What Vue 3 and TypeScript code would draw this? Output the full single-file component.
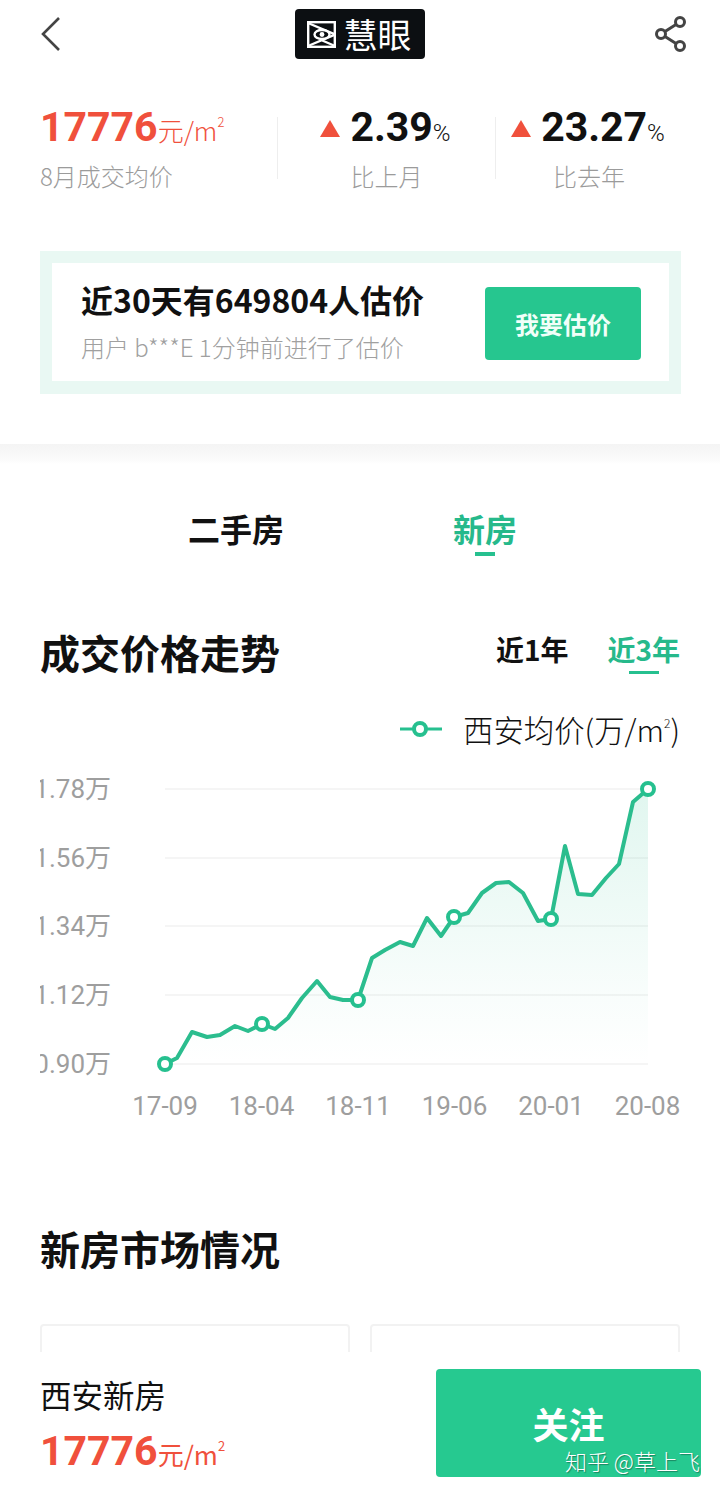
<script setup lang="ts">
const pts: [number, number][] = [
  [165, 1064], [177, 1058], [192, 1032], [207, 1037], [220, 1035], [235, 1026], [248, 1031], [262, 1024],
  [275, 1029], [288, 1018], [302, 998], [317, 981], [330, 997], [343, 1000], [358, 1000], [372, 958],
  [385, 950], [400, 942], [413, 946], [427, 918], [441, 936], [454, 917], [468, 913], [482, 893],
  [496, 883], [509, 882], [523, 893], [538, 921], [551, 919], [565, 846], [578, 894], [592, 895],
  [606, 878], [619, 864], [633, 802], [648, 789],
]
const ox = 40
const oy = 770
const shifted = pts.map(([x, y]) => [x - ox, y - oy])
const line = shifted.map((p) => p.join(',')).join(' ')
const area = `${line} 608,294 125,294`
const markers = [0, 7, 14, 21, 28, 35].map((i) => shifted[i])
const grid = [19, 88, 156, 225, 294]
const yLabels = ['1.78万', '1.56万', '1.34万', '1.12万', '0.90万']
const xLabels = ['17-09', '18-04', '18-11', '19-06', '20-01', '20-08']
</script>

<template>
  <div class="page">
    <header class="nav">
      <svg class="back" width="22" height="36" viewBox="0 0 22 36">
        <path d="M19 2 3 18l16 16" fill="none" stroke="#444" stroke-width="2.6" />
      </svg>
      <div class="logo">
        <svg width="29" height="27" viewBox="0 0 29 27" fill="none" stroke="#fff" stroke-width="2.4">
          <rect x="1.200" y="1.200" width="26.600" height="24.600" />
          <path d="M1 2 28 13.500 1 25M28 25 13 18.500" />
          <ellipse cx="15" cy="13.500" rx="7.500" ry="4.500" fill="#0c0f12" />
          <circle cx="15" cy="13.500" r="2.400" fill="#fff" stroke="none" />
        </svg>
        <span>慧眼</span>
      </div>
      <svg class="share" width="36" height="38" viewBox="0 0 36 38" fill="none" stroke="#444" stroke-width="3">
        <circle cx="26" cy="7" r="4.500" />
        <circle cx="7" cy="19" r="4.500" />
        <circle cx="26" cy="31" r="4.500" />
        <path d="M11 16.500 22 9.500M11 21.500 22 28.500" />
      </svg>
    </header>

    <section class="stats">
      <div class="stat first">
        <div class="val"><b class="red">17776</b><span class="red unit">元/m<sup>2</sup></span></div>
        <div class="lab">8月成交均价</div>
      </div>
      <div class="stat second">
        <div class="val"><i class="tri"></i><b>2.39</b><span class="pct">%</span></div>
        <div class="lab">比上月</div>
      </div>
      <div class="stat third">
        <div class="val"><i class="tri"></i><b>23.27</b><span class="pct">%</span></div>
        <div class="lab">比去年</div>
      </div>
    </section>

    <section class="banner">
      <div class="banner-in">
        <div>
          <div class="b-title">近30天有649804人估价</div>
          <div class="b-sub">用户 b***E 1分钟前进行了估价</div>
        </div>
        <div class="b-btn">我要估价</div>
      </div>
    </section>

    <div class="band"></div>

    <nav class="tabs">
      <span>二手房</span>
      <span class="on">新房</span>
    </nav>

    <section class="trend-head">
      <h2>成交价格走势</h2>
      <div class="range">
        <span>近1年</span>
        <span class="on">近3年</span>
      </div>
    </section>

    <div class="legend">
      <svg width="42" height="16" viewBox="0 0 42 16">
        <path d="M0 8h42" stroke="#26c08f" stroke-width="3" />
        <circle cx="20" cy="8" r="6" fill="#fff" stroke="#26c08f" stroke-width="4" />
      </svg>
      <span>西安均价(万/m<sup>2</sup>)</span>
    </div>

    <div class="chart">
      <svg width="640" height="360" viewBox="0 0 640 360">
        <defs>
          <linearGradient id="fade" x1="0" y1="0" x2="0" y2="1">
            <stop offset="0" stop-color="#26c08f" stop-opacity=".14" />
            <stop offset=".75" stop-color="#26c08f" stop-opacity=".03" />
            <stop offset="1" stop-color="#26c08f" stop-opacity="0" />
          </linearGradient>
        </defs>
        <line v-for="y in grid" :key="y" x1="125" x2="608" :y1="y" :y2="y" stroke="#f2f2f2" stroke-width="1.500" />
        <polygon :points="area" fill="url(#fade)" />
        <polyline :points="line" fill="none" stroke="#2bbd8e" stroke-width="4" stroke-linejoin="round" />
        <circle v-for="(m, i) in markers" :key="i" :cx="m[0]" :cy="m[1]" r="6" fill="#fff" stroke="#26c08f" stroke-width="4" />
        <text v-for="(t, i) in yLabels" :key="t" class="ax" x="71" :y="grid[i] + 9" text-anchor="end">{{ t }}</text>
        <text v-for="(t, i) in xLabels" :key="t" class="ax" :x="125 + i * 96.500" y="345" text-anchor="middle">{{ t }}</text>
      </svg>
    </div>

    <h2 class="market">新房市场情况</h2>

    <div class="cards">
      <div class="card"></div>
      <div class="card"></div>
    </div>

    <footer class="bar">
      <div class="bar-left">
        <div class="city">西安新房</div>
        <div class="val"><b class="red">17776</b><span class="red unit heavy">元/m<sup>2</sup></span></div>
      </div>
      <div class="follow">
        <span>关注</span>
        <em>知乎 @草上飞</em>
      </div>
    </footer>
  </div>
</template>

<style>
html,
body {
  margin: 0;
  background: #fff;
}
</style>

<style scoped>
.page {
  position: relative;
  width: 720px;
  height: 1492px;
  overflow: hidden;
  background: #fff;
  font-family: "Noto Sans CJK SC", "Noto Sans", sans-serif;
  color: #111;
}

.nav {
  height: 68px;
  padding: 0 30px 0 40px;
  display: flex;
  align-items: center;
  justify-content: space-between;
}

.logo {
  display: flex;
  align-items: center;
  gap: 8px;
  width: 130px;
  height: 50px;
  box-sizing: border-box;
  margin-left: 3px;
  padding-left: 12px;
  background: #0c0f12;
  border-radius: 4px;
  color: #fff;
  font-size: 34px;
  line-height: 1;
}

.stats {
  height: 127px;
  padding-top: 34px;
  box-sizing: border-box;
  display: flex;
}

.stat {
  height: 94px;
}

.first {
  width: 277px;
  padding-left: 40px;
  box-sizing: border-box;
}

.second,
.third {
  border-left: 1px solid #eee;
  text-align: center;
  height: 62px;
  margin-top: 15px;
}

.second {
  width: 217px;
}

.third {
  width: 186px;
}

.stat .val {
  font-family: Roboto, sans-serif;
  height: 50px;
  line-height: 50px;
  white-space: nowrap;
}

.second .val,
.third .val {
  margin-top: -15px;
  margin-left: -2px;
}

.val b {
  font-size: 41px;
  font-weight: 700;
}

.red {
  color: #f0503c;
}

.unit {
  font-size: 26px;
  font-family: "Noto Sans CJK SC", sans-serif;
  font-weight: 300;
}

.heavy {
  font-weight: 400;
}

.unit sup {
  font-size: 13px;
  vertical-align: 14px;
  line-height: 0;
}

.pct {
  font-size: 24px;
  font-weight: 300;
}

.tri {
  display: inline-block;
  width: 0;
  height: 0;
  margin-right: 10px;
  vertical-align: 4px;
  border-left: 10px solid transparent;
  border-right: 10px solid transparent;
  border-bottom: 17px solid #f0503c;
}

.lab {
  margin-top: 8px;
  font-size: 24px;
  line-height: 32px;
  color: #9b9b9b;
  font-weight: 300;
}

.banner {
  margin: 56px 39px 0 40px;
  height: 143px;
  box-sizing: border-box;
  padding: 12px;
  background: #e9f8f3;
}

.banner-in {
  height: 118px;
  background: #fff;
  display: flex;
  align-items: center;
  justify-content: space-between;
  padding: 0 28px 0 29px;
}

.b-title {
  font-size: 32px;
  font-weight: 700;
  line-height: 40px;
  white-space: nowrap;
  margin-top: -3px;
}

.b-sub {
  margin-top: 11px;
  font-size: 24px;
  line-height: 32px;
  color: #a0a0a0;
  font-weight: 300;
  white-space: nowrap;
  position: relative;
  top: 1px;
}

.b-btn {
  flex: none;
  width: 156px;
  height: 73px;
  line-height: 73px;
  margin-top: 2px;
  text-align: center;
  background: #26c68f;
  border-radius: 4px;
  color: #f1fff9;
  font-size: 24px;
  font-weight: 700;
}

.band {
  margin-top: 50px;
  height: 20px;
  background: linear-gradient(#f4f4f4, #fbfbfb 80%, #fff);
}

.tabs {
  height: 98px;
  display: flex;
  align-items: flex-start;
  padding-top: 42px;
  box-sizing: border-box;
}

.tabs span {
  position: relative;
  font-size: 32px;
  font-weight: 700;
  line-height: 44px;
}

.tabs span:first-child {
  margin-left: 188px;
}

.tabs span.on {
  margin-left: 169px;
  color: #26b98b;
}

.tabs span.on::after {
  content: "";
  position: absolute;
  left: 22px;
  bottom: -6px;
  width: 20px;
  height: 4px;
  background: #26c08f;
}

.trend-head {
  margin-top: 62px;
  padding: 0 40px;
  display: flex;
  align-items: flex-start;
  justify-content: space-between;
}

h2 {
  margin: 0;
  font-size: 40px;
  line-height: 56px;
  font-weight: 700;
}

.range {
  display: flex;
  gap: 39px;
  margin-top: 5px;
  font-size: 28px;
  font-weight: 700;
  line-height: 40px;
}

.range .on {
  position: relative;
  color: #26b98b;
}

.range .on::after {
  content: "";
  position: absolute;
  left: 22px;
  bottom: -5px;
  width: 30px;
  height: 3px;
  background: #26c08f;
}

.legend {
  margin-top: 27px;
  padding-right: 40px;
  display: flex;
  justify-content: flex-end;
  align-items: center;
  gap: 21px;
  font-size: 30.400px;
  line-height: 44px;
  font-weight: 300;
}

.legend sup {
  font-size: 12px;
  vertical-align: 14px;
  line-height: 0;
}

.chart {
  margin-top: 19px;
  margin-left: 40px;
  height: 360px;
  overflow: hidden;
}

.chart svg {
  display: block;
}

.ax {
  font-family: Roboto, "Noto Sans CJK SC", sans-serif;
  font-size: 26px;
  fill: #9e9e9e;
}

.market {
  margin: 90px 40px 0;
}

.cards {
  margin: 48px 40px 0;
  display: flex;
  gap: 20px;
}

.card {
  flex: 1;
  height: 120px;
  border: 2px solid #f2f2f2;
  border-radius: 4px;
}

.bar {
  position: absolute;
  left: 0;
  right: 0;
  top: 1352px;
  bottom: 0;
  background: #fff;
  padding: 17px 19px 0 40px;
  display: flex;
  justify-content: space-between;
}

.city {
  font-size: 31.500px;
  line-height: 42px;
  margin-top: 4px;
}

.bar-left .val {
  font-family: Roboto, sans-serif;
  line-height: 50px;
  height: 50px;
  margin-top: 11px;
}

.follow {
  position: relative;
  width: 265px;
  height: 108px;
  background: #26c990;
  border-radius: 4px;
  color: #fff;
  overflow: hidden;
  text-align: center;
}

.follow span {
  display: block;
  font-size: 36px;
  font-weight: 700;
  line-height: 108px;
}

.follow em {
  position: absolute;
  left: 129px;
  top: 76px;
  font-style: normal;
  font-size: 22px;
  line-height: 30px;
  font-weight: 300;
  white-space: nowrap;
  text-shadow: 1px 1px 1px rgba(0, 0, 0, 0.35);
}
</style>
